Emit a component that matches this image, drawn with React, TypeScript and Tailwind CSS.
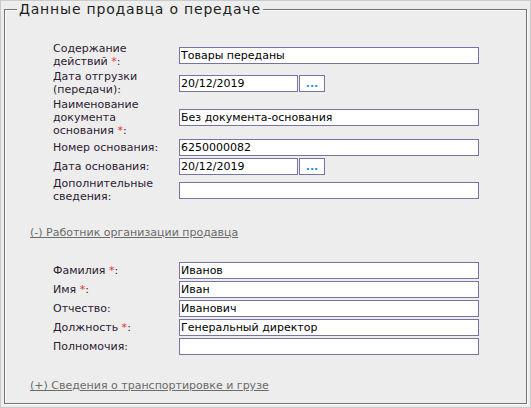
import { ReactNode } from "react"

const Req = () => <span className="text-[#e8302a]"> *</span>

type Row = {
  label: ReactNode
  value?: string
  date?: boolean
}

const sellerRows: Row[] = [
  { label: <>Содержание<br />действий<Req />:</>, value: "Товары переданы" },
  { label: <>Дата отгрузки<br />(передачи):</>, value: "20/12/2019", date: true },
  { label: <>Наименование<br />документа<br />основания<Req />:</>, value: "Без документа-основания" },
  { label: "Номер основания:", value: "6250000082" },
  { label: "Дата основания:", value: "20/12/2019", date: true },
  { label: <>Дополнительные<br />сведения:</>, value: "" },
]

const workerRows: Row[] = [
  { label: <>Фамилия<Req />:</>, value: "Иванов" },
  { label: <>Имя<Req />:</>, value: "Иван" },
  { label: "Отчество:", value: "Иванович" },
  { label: <>Должность<Req />:</>, value: "Генеральный директор" },
  { label: "Полномочия:", value: "" },
]

function Field({ value, date }: { value?: string; date?: boolean }) {
  if (date) {
    return (
      <div className="flex gap-[1px]">
        <input
          readOnly
          value={value}
          className="w-[119px] h-[17px] border border-[#7873a0] bg-white px-[1px] text-[11px] text-black outline-none"
        />
        <button className="w-[26px] h-[17px] border border-[#7873a0] bg-white text-[11px] leading-[13px] font-bold text-[#1f95d2] flex items-end justify-center pb-[1px]">
          ...
        </button>
      </div>
    )
  }
  return (
    <input
      readOnly
      value={value}
      className="w-[300px] h-[17px] border border-[#7873a0] bg-white px-[1px] text-[11px] text-black outline-none"
    />
  )
}

function Rows({ rows }: { rows: Row[] }) {
  return (
    <div className="ml-[48px] grid grid-cols-[126px_300px] gap-y-[2px] items-center">
      {rows.map((r, i) => (
        <div key={i} className="contents">
          <div className="text-[11px] leading-[13px] text-[#2e1a33]">{r.label}</div>
          <Field value={r.value} date={r.date} />
        </div>
      ))}
    </div>
  )
}

export default function App() {
  return (
    <div
      className="w-[531px] h-[408px] box-border border border-[#cbcbcb] bg-[#ecedec] flex flex-col"
      style={{ fontFamily: '"DejaVu Sans", Verdana, sans-serif' }}
    >
      <fieldset className="flex-1 ml-[3px] mr-[3px] mb-[3px] border border-[#737373] shadow-[inset_1px_1px_0_#fbfbfb,1px_1px_0_#fbfbfb] p-0 min-w-0">
        <legend className="ml-[12px] px-[2px] bg-[#ecedec] text-[14px] leading-[16px] tracking-[0.8px] text-[#1e1e1e]">
          Данные продавца о передаче
        </legend>
        <div className="pt-[25px]">
          <Rows rows={sellerRows} />
          <div className="mt-[23px] ml-[25px] text-[11px] leading-[13px] text-[#6b6b6b] underline">
            (-) Работник организации продавца
          </div>
          <div className="mt-[23px]">
            <Rows rows={workerRows} />
          </div>
          <div className="mt-[24px] ml-[25px] text-[11px] leading-[13px] text-[#6b6b6b] underline">
            (+) Сведения о транспортировке и грузе
          </div>
        </div>
      </fieldset>
    </div>
  )
}
